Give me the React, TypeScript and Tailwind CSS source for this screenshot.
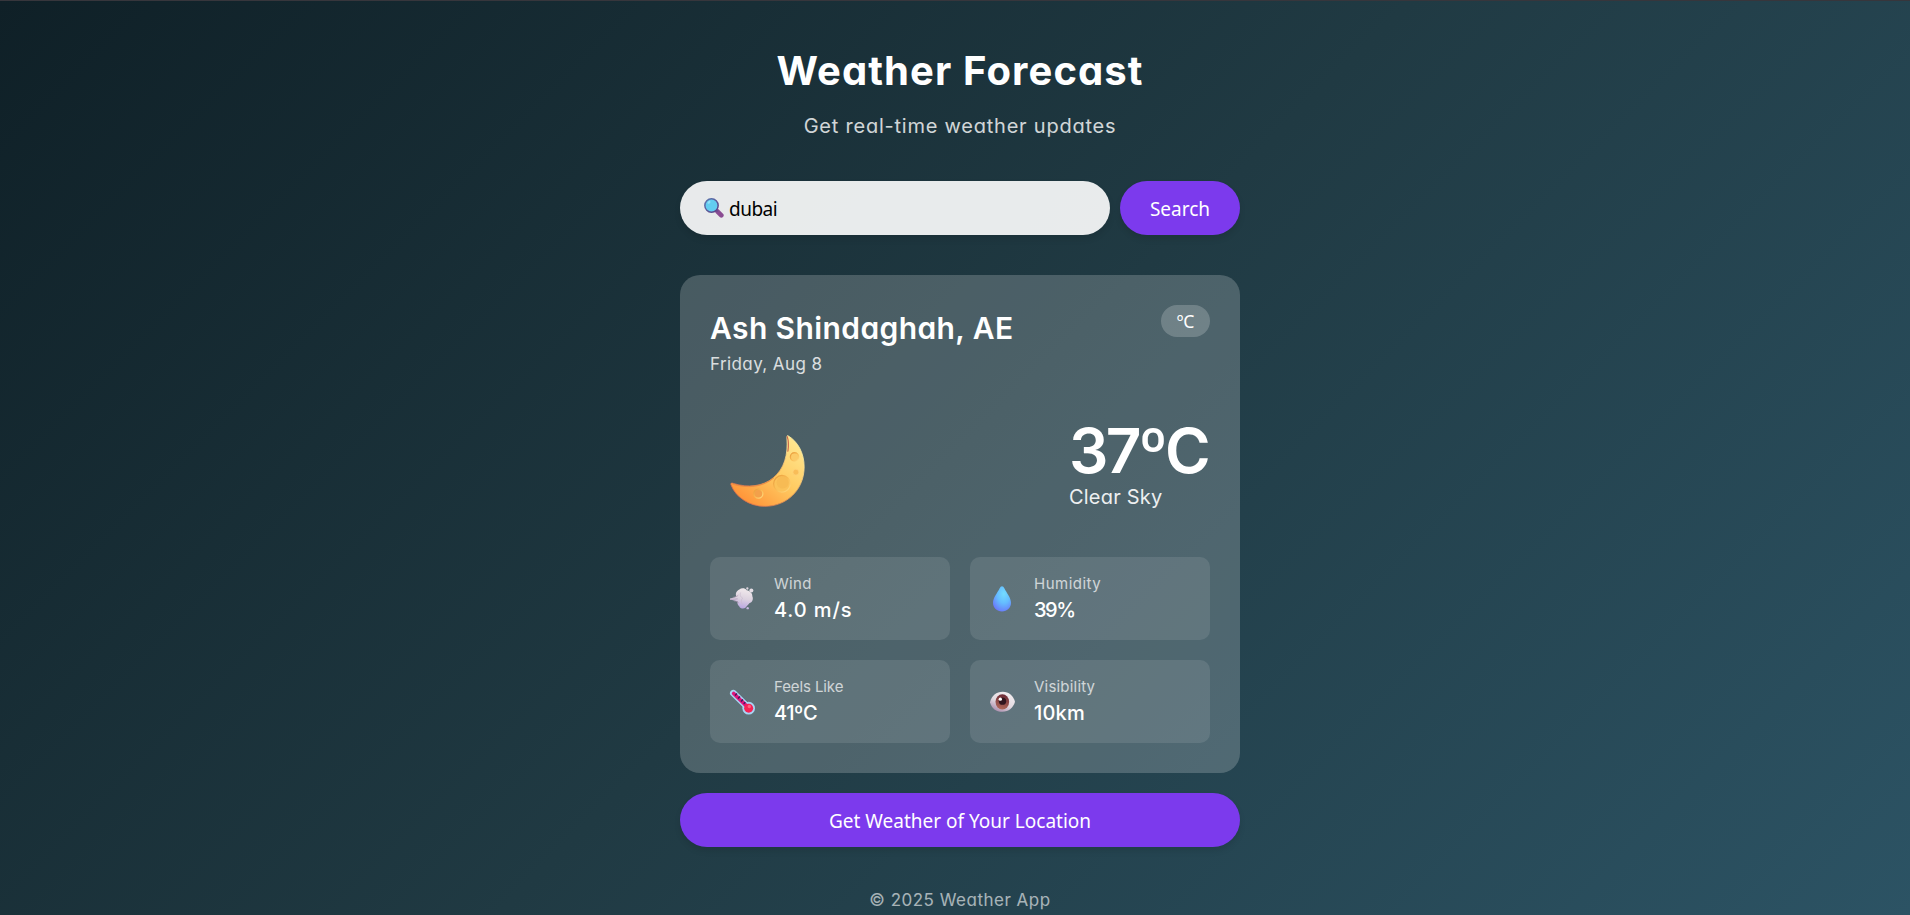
import React from "react";

function MagnifierIcon() {
  return (
    <svg viewBox="0 0 60 60" className="h-5 w-5 shrink-0" aria-hidden="true">
      <defs>
        <linearGradient id="lens-rim" x1="0" y1="0" x2="1" y2="1">
          <stop offset="0" stopColor="#5a78b0" />
          <stop offset="1" stopColor="#5b3f86" />
        </linearGradient>
      </defs>
      <path d="M40 40 L52 52" stroke="#8a4c92" strokeWidth="14" strokeLinecap="round" />
      <path d="M35 35 L41 41" stroke="#6b4b8c" strokeWidth="6" />
      <circle cx="22.500" cy="22.500" r="20" fill="#62cdf0" stroke="url(#lens-rim)" strokeWidth="4.500" />
      <ellipse cx="15" cy="13" rx="5" ry="3.500" transform="rotate(-40 15 13)" fill="#93e0f8" />
    </svg>
  );
}

function MoonIcon() {
  return (
    <svg viewBox="89 59 225 217" className="h-[72px] w-[75px] shrink-0" aria-hidden="true">
      <defs>
        <linearGradient id="moon-body" x1="0.850" y1="0.100" x2="0.150" y2="0.950">
          <stop offset="0" stopColor="#ffe58c" />
          <stop offset="0.450" stopColor="#ffcb62" />
          <stop offset="1" stopColor="#ff9136" />
        </linearGradient>
        <linearGradient id="moon-edge" x1="1" y1="0.300" x2="0.200" y2="1">
          <stop offset="0" stopColor="#fff0a4" />
          <stop offset="0.450" stopColor="#f3a153" />
          <stop offset="1" stopColor="#d4684f" />
        </linearGradient>
        <linearGradient id="moon-crater" x1="0" y1="0" x2="1" y2="1">
          <stop offset="0" stopColor="#e79a3a" />
          <stop offset="0.500" stopColor="#f9bb54" />
          <stop offset="1" stopColor="#ffdc82" />
        </linearGradient>
      </defs>
      <path
        d="M263 61C294 79 312 115 312 155C312 224 260 274 193 274C148 274 105 247 91 208C91 204 94 203 99 205C142 219 188 214 219 188C252 160 264 120 260 67C260 63 261 60 263 61Z"
        fill="url(#moon-body)"
        stroke="url(#moon-edge)"
        strokeWidth="2.500"
      />
      <path d="M261 64C265 76 266 88 263 108" fill="none" stroke="#c9674b" strokeWidth="3.500" strokeLinecap="round" />
      <path d="M92 206C140 222 188 216 220 189" fill="none" stroke="#e98a45" strokeWidth="2.500" strokeLinecap="round" />
      <circle cx="245" cy="206" r="25" fill="#fbc25a" stroke="url(#moon-crater)" strokeWidth="4" />
      <circle cx="247" cy="202" r="18" fill="#f4b34d" opacity="0.500" />
      <circle cx="283" cy="125" r="12.500" fill="#fbcb68" stroke="url(#moon-crater)" strokeWidth="4" />
      <circle cx="287" cy="171" r="9" fill="#f9bd58" stroke="#ffd57c" strokeWidth="2" />
      <circle cx="174" cy="236" r="13.500" fill="#f3a04a" stroke="url(#moon-crater)" strokeWidth="4" />
    </svg>
  );
}

function WindIcon() {
  return (
    <svg viewBox="27 46.500 78 78" className="h-[26px] w-[26px] shrink-0" aria-hidden="true">
      <defs>
        <linearGradient id="wind-puff" x1="0.600" y1="0" x2="0.400" y2="1">
          <stop offset="0" stopColor="#f1e9ec" />
          <stop offset="0.500" stopColor="#dcd2df" />
          <stop offset="1" stopColor="#b7a3e0" />
        </linearGradient>
      </defs>
      <path
        d="M30 84C38 82 46 80 49 77C45 70 50 60 58 57C64 52 75 52 80 59C90 61 98 68 97 77C101 86 97 95 88 98C84 104 80 106 77 111C72 116 61 115 58 108C53 104 51 97 53 93C47 91 38 89 30 88Z"
        fill="url(#wind-puff)"
      />
      <path d="M31 86C40 86 46 86 53 85M40 80C47 80 52 77 55 74M42 91C49 92 53 94 56 97" fill="none" stroke="#a993ae" strokeWidth="2" />
      <path d="M62 66C58 75 63 80 68 83C62 88 63 96 67 101" fill="none" stroke="#c9bacd" strokeWidth="2" />
      <circle cx="94" cy="60" r="6" fill="#e3dde4" />
      <circle cx="82" cy="54" r="3.500" fill="#ddd5df" />
      <circle cx="83" cy="113" r="3.500" fill="#c6b7df" />
    </svg>
  );
}

function DropIcon() {
  return (
    <svg viewBox="27 46.500 78 78" className="h-[26px] w-[26px] shrink-0" aria-hidden="true">
      <defs>
        <radialGradient id="drop-body" cx="0.600" cy="0.300" r="0.750">
          <stop offset="0" stopColor="#74dcff" />
          <stop offset="0.500" stopColor="#65bcff" />
          <stop offset="1" stopColor="#6a78fa" />
        </radialGradient>
      </defs>
      <path
        d="M66 47C69 47 71 49 73 53C79 66 93 81 93 97C93 113 81 123 66 123C51 123 39 113 39 97C39 81 53 66 59 53C61 49 63 47 66 47Z"
        fill="url(#drop-body)"
      />
    </svg>
  );
}

function ThermometerIcon() {
  return (
    <svg viewBox="27 40.500 78 78" className="h-[26px] w-[26px] shrink-0" aria-hidden="true">
      <path d="M40 53L80 92" stroke="#a8d4f5" strokeWidth="20" strokeLinecap="round" />
      <circle cx="86" cy="98" r="19" fill="#a8d4f5" />
      <path d="M41 54L80 92" stroke="#e0157c" strokeWidth="11" strokeLinecap="round" />
      <path d="M45 60L51 54M54 69L60 63M63 78L69 72M71 85L76 80" stroke="#3a1a5c" strokeWidth="4" />
      <circle cx="86" cy="98" r="13.500" fill="#f52355" />
      <circle cx="88" cy="93" r="5" fill="#ff6280" />
    </svg>
  );
}

function EyeIcon() {
  return (
    <svg viewBox="27 40.500 78 78" className="h-[26px] w-[26px] shrink-0" aria-hidden="true">
      <defs>
        <linearGradient id="eye-white" x1="0.800" y1="0" x2="0.200" y2="1">
          <stop offset="0" stopColor="#f4eff1" />
          <stop offset="0.550" stopColor="#e2d9e0" />
          <stop offset="1" stopColor="#a585a8" />
        </linearGradient>
        <linearGradient id="eye-iris" x1="0.600" y1="0" x2="0.400" y2="1">
          <stop offset="0" stopColor="#6b2834" />
          <stop offset="1" stopColor="#b0695a" />
        </linearGradient>
      </defs>
      <path
        d="M30 80C35 60 49 49 68 49C87 49 100 61 105 79C100 97 86 109 67 109C48 109 35 99 30 80Z"
        fill="url(#eye-white)"
      />
      <ellipse cx="67" cy="79" rx="20.500" ry="23" fill="url(#eye-iris)" />
      <circle cx="67.500" cy="77" r="11" fill="#32161f" />
      <circle cx="61" cy="71" r="5" fill="#fff" />
    </svg>
  );
}

const stats = [
  { label: "Wind", value: "4.0 m/s", icon: <WindIcon />, labelClass: "tracking-[0.3px]", valueClass: "tracking-[0.9px]" },
  { label: "Humidity", value: "39%", icon: <DropIcon />, labelClass: "tracking-[0.5px]", valueClass: "tracking-[-1.5px]" },
  { label: "Feels Like", value: "41ºC", icon: <ThermometerIcon />, labelClass: "tracking-[-0.1px]", valueClass: "tracking-[-0.4px]" },
  { label: "Visibility", value: "10km", icon: <EyeIcon />, labelClass: "tracking-[0.2px]", valueClass: "tracking-[0.2px]" },
];

export default function App() {
  return (
    <div className="flex h-[915px] flex-col items-center overflow-hidden border-t border-[#37363c] bg-[linear-gradient(135deg,#0f2027,#203a43,#2c5364)] pl-2.5 font-['Inter',sans-serif] text-white [font-feature-settings:'cv11']">
      <header className="mt-10 flex flex-col items-center">
        <h1 className="text-[40px] leading-[60px] font-bold tracking-[1.1px] whitespace-nowrap">Weather Forecast</h1>
        <p className="mt-2.5 text-xl leading-[30px] tracking-[0.77px] whitespace-nowrap opacity-80">
          Get real-time weather updates
        </p>
      </header>

      <main className="mt-10 flex w-[560px] flex-col">
        <form className="flex gap-2.5" onSubmit={(e) => e.preventDefault()}>
          <label className="flex h-[54px] flex-1 items-center gap-[5px] rounded-full bg-white/90 pl-6 font-['Noto_Sans',sans-serif] text-[19px] text-black shadow-[0_4px_6px_rgba(0,0,0,0.1)]">
            <MagnifierIcon />
            <input className="min-w-0 flex-1 bg-transparent pt-0.5 pr-6 tracking-[-0.5px] outline-none" defaultValue="dubai" />
          </label>
          <button className="h-[54px] w-[120px] rounded-full bg-[#7c3aed] pt-0.5 font-['Noto_Sans',sans-serif] text-[19px] shadow-[0_4px_6px_rgba(0,0,0,0.1)]">
            Search
          </button>
        </form>

        <section className="mt-10 flex h-[498px] flex-col rounded-[20px] bg-white/20 p-[30px]">
          <div className="flex items-start justify-between">
            <div>
              <h2 className="text-[30px] leading-[47px] font-semibold tracking-[0.4px] whitespace-nowrap">Ash Shindaghah, AE</h2>
              <p className="text-[17px] leading-6 tracking-[0.4px] opacity-80">Friday, Aug 8</p>
            </div>
            <button className="h-8 w-[49px] rounded-full bg-white/20 font-['Noto_Sans',sans-serif] text-[17.6px] leading-8">
              ºC
            </button>
          </div>

          <div className="mt-[42px] flex justify-between pl-5">
            <div className="mt-[17px]">
              <MoonIcon />
            </div>
            <div className="w-[141px]">
              <p className="text-[62px] leading-[66px] font-semibold tracking-[-2.8px] whitespace-nowrap">37ºC</p>
              <p className="-mt-px text-xl leading-7 tracking-[0.2px] opacity-90">Clear Sky</p>
            </div>
          </div>

          <div className="mt-auto grid grid-cols-2 gap-5">
            {stats.map((s) => (
              <div key={s.label} className="flex h-[83px] items-center gap-[19px] rounded-[10px] bg-white/10 pl-[19px]">
                {s.icon}
                <div className="flex flex-col pb-0.5 whitespace-nowrap">
                  <span className={`text-[15px] leading-6 opacity-70 ${s.labelClass}`}>{s.label}</span>
                  <span className={`text-xl leading-7 font-medium ${s.valueClass}`}>{s.value}</span>
                </div>
              </div>
            ))}
          </div>
        </section>

        <button className="mt-5 h-[54px] rounded-full bg-[#7c3aed] pt-0.5 font-['Noto_Sans',sans-serif] text-[19px] shadow-[0_4px_6px_rgba(0,0,0,0.1)]">
          Get Weather of Your Location
        </button>
      </main>

      <footer className="mt-[41px] text-[17px] leading-6 tracking-[0.5px] opacity-60">© 2025 Weather App</footer>
    </div>
  );
}
